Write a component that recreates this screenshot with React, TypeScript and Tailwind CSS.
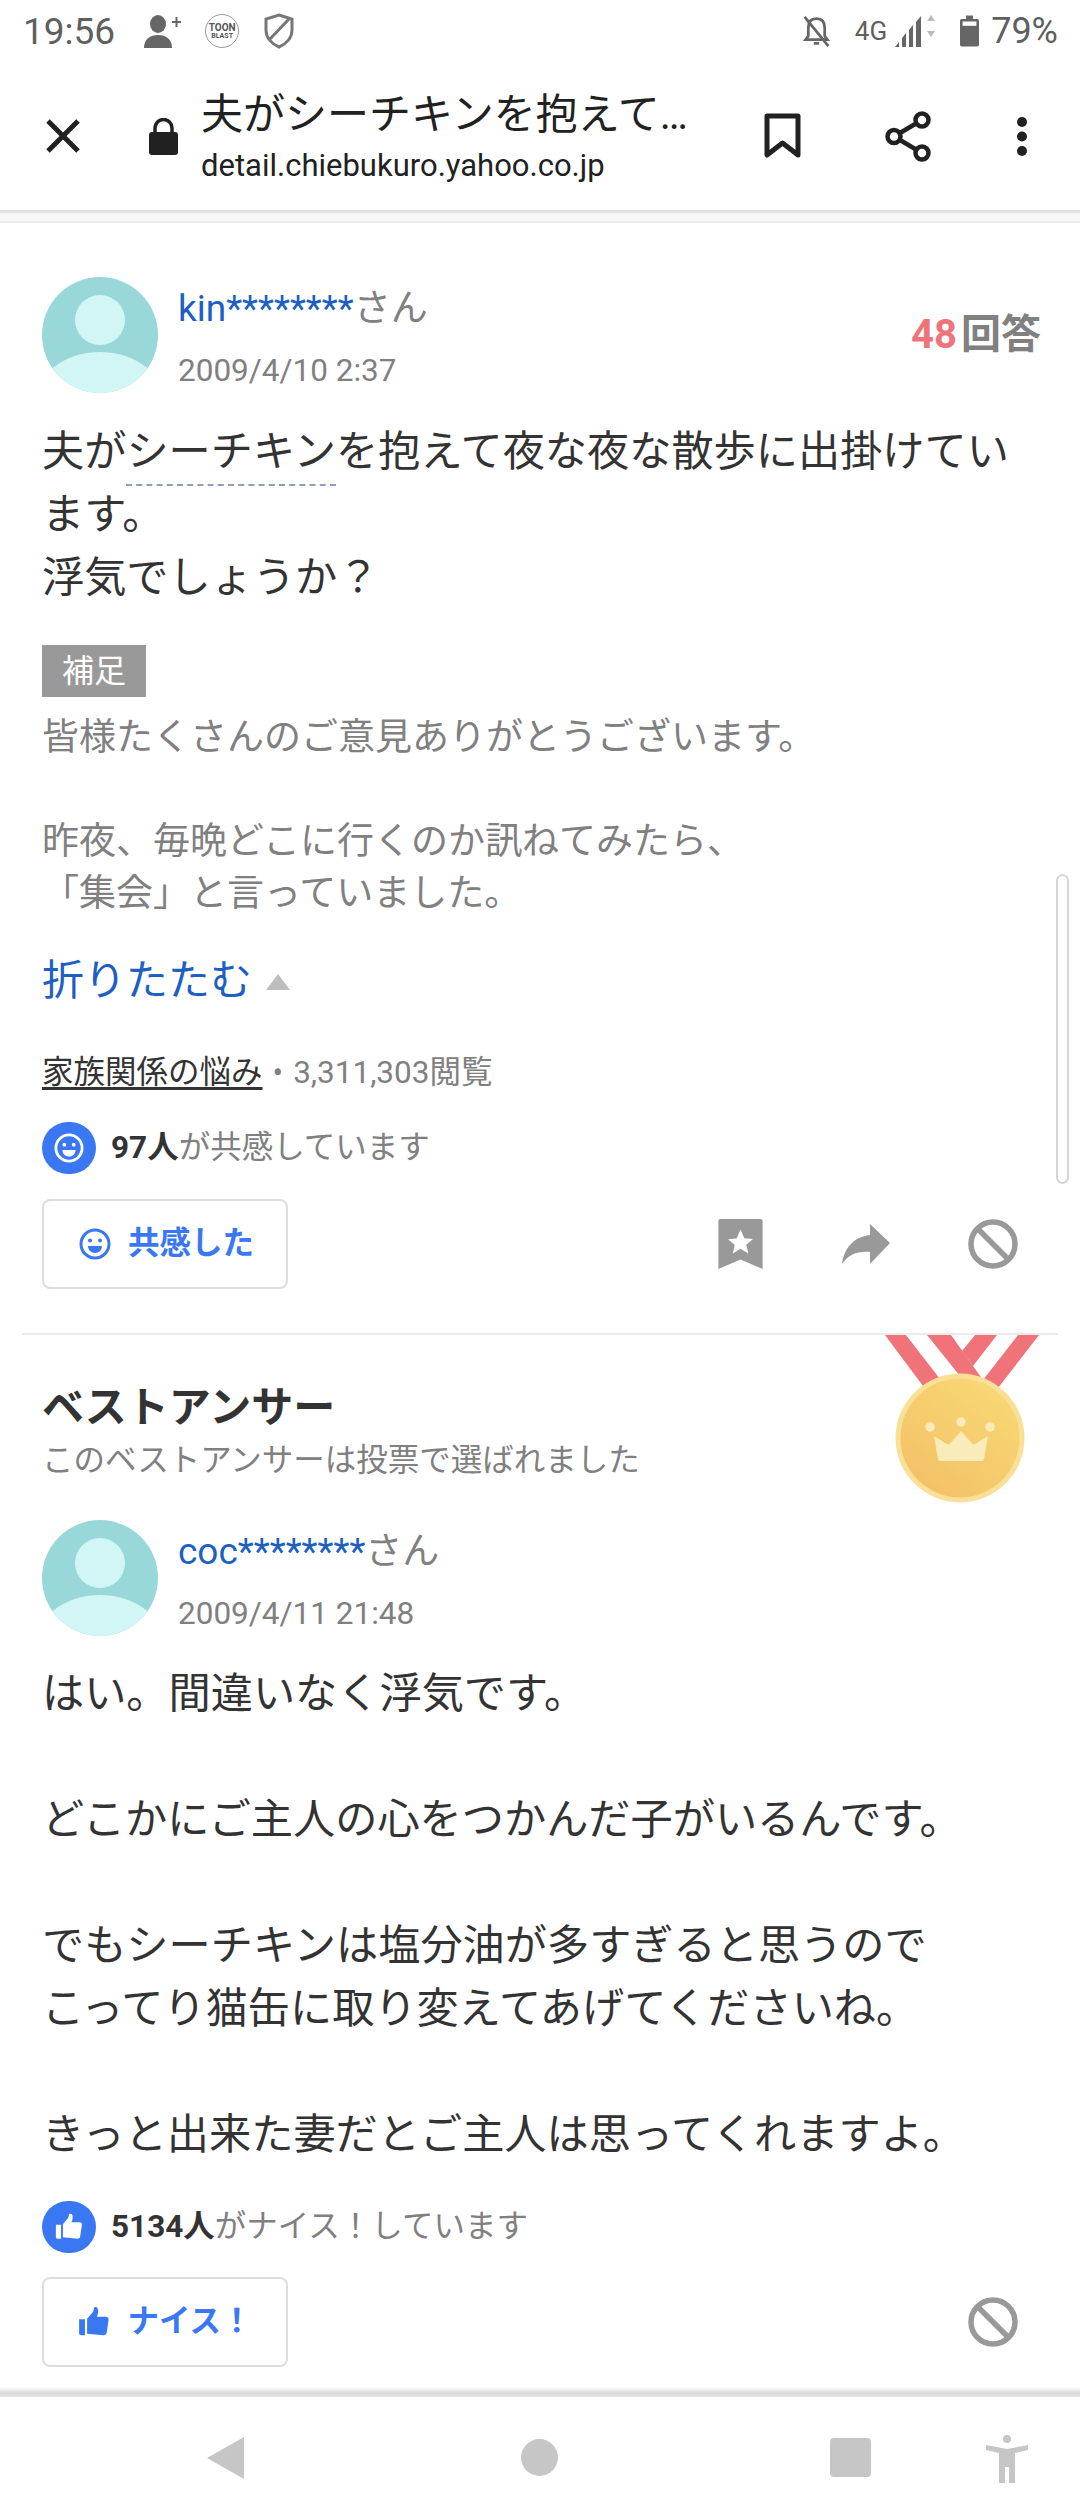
import React from "react";

const Avatar = () => (
  <svg viewBox="0 0 116 116" className="w-[116px] h-[116px] shrink-0">
    <defs>
      <clipPath id="avatarClip">
        <circle cx="58" cy="58" r="58" />
      </clipPath>
    </defs>
    <g clipPath="url(#avatarClip)">
      <rect width="116" height="116" fill="#99d8d8" />
      <ellipse cx="58" cy="43" rx="25" ry="25" fill="#d2f5f5" />
      <ellipse cx="58" cy="128" rx="66" ry="53" fill="#d2f5f5" />
    </g>
  </svg>
);

const Smile = ({ color, className }: { color: string; className: string }) => (
  <svg viewBox="0 0 32 32" className={className}>
    <circle cx="16" cy="16" r="14" fill="none" stroke={color} strokeWidth="3" />
    <circle cx="11" cy="12.5" r="2" fill={color} />
    <circle cx="21" cy="12.5" r="2" fill={color} />
    <path d="M9 18h14c0 4-3 7-7 7s-7-3-7-7z" fill={color} />
  </svg>
);

const Thumb = ({ color, className }: { color: string; className: string }) => (
  <svg viewBox="0 0 32 32" className={className}>
    <path d="M2 13.5h5.500v15H4a2 2 0 0 1-2-2z" fill={color} />
    <path d="M9.500 13l5.500-6.500c.6-.8.6-2 .8-3.200.2-1.500 2.200-2 3.200-.8 1.500 1.800 1.200 5.500-.3 8.500h8.300c2 0 3 1.300 2.700 3.200l-1.800 12c-.2 1.500-1.200 2.300-2.700 2.300L9.500 27z" fill={color} />
  </svg>
);

const Prohibit = () => (
  <svg viewBox="0 0 50 50" className="w-[50px] h-[50px] shrink-0">
    <circle cx="25" cy="25" r="22" fill="none" stroke="#999" strokeWidth="5.500" />
    <path d="M10 10l30 30" stroke="#999" strokeWidth="5.500" />
  </svg>
);

const Medal = () => (
  <svg viewBox="0 0 160 170" className="w-[160px] h-[170px]">
    <defs>
      <linearGradient id="medalFill" x1="0.8" y1="0.1" x2="0.2" y2="0.9">
        <stop offset="0" stopColor="#f8d774" />
        <stop offset="1" stopColor="#f3c268" />
      </linearGradient>
    </defs>
    <path d="M4 0h21l34 44-17 7z" fill="#f0737a" />
    <path d="M46 0h24l32 45-23-4z" fill="#f0737a" />
    <path d="M94 0h22L92 31 81 16z" fill="#f0737a" />
    <path d="M137 0h21l-41 53-15-8z" fill="#f0737a" />
    <circle cx="79" cy="103" r="64.500" fill="#fae097" />
    <circle cx="79" cy="103" r="59.500" fill="url(#medalFill)" />
    <circle cx="49" cy="92" r="4.700" fill="#faebbb" />
    <circle cx="80" cy="87" r="4.700" fill="#faebbb" />
    <circle cx="109" cy="92" r="4.700" fill="#faebbb" />
    <path d="M53 101l13 8c1 .7 2 .5 3-.5l11-12.500 11 12.500c1 1 2 1.200 3 .5l13-8-4 23c-.2 1.300-1 2-2 2H59c-1 0-1.800-.7-2-2z" fill="#faebbb" />
  </svg>
);

export default function App() {
  return (
    <div className="relative w-[1080px] h-[2520px] overflow-hidden bg-white flex flex-col font-['Roboto','Noto_Sans_CJK_JP',sans-serif]">
      {/* status bar */}
      <div className="h-[62px] flex items-center justify-between pl-[23px] pr-[22px] text-[#5f5f5f] shrink-0">
        <div className="flex items-center">
          <span className="text-[37px] leading-none">19:56</span>
          <svg viewBox="0 0 39 33" className="w-[39px] h-[33px] ml-[28px]">
            <ellipse cx="15" cy="9" rx="8" ry="9" fill="#666" />
            <path d="M1 33c0-9 6-13 14-13s14 4 14 13z" fill="#666" />
            <path d="M29 7h9M33.500 2v10" stroke="#666" strokeWidth="2" />
          </svg>
          <div className="w-[34px] h-[34px] ml-[23px] rounded-full border border-[#999] flex flex-col items-center justify-center font-bold text-[#555] leading-none">
            <span className="text-[10px]">TOON</span>
            <span className="text-[7px]">BLAST</span>
          </div>
          <svg viewBox="0 0 32 36" className="w-[32px] h-[36px] ml-[24px]">
            <path d="M16 2l13 4v11c0 8-6 14-13 17C9 31 3 25 3 17V6z" fill="none" stroke="#777" strokeWidth="3" />
            <path d="M7 26L26 6" stroke="#777" strokeWidth="3" />
          </svg>
        </div>
        <div className="flex items-center">
          <svg viewBox="0 0 34 36" className="w-[31px] h-[33px]">
            <path d="M17 4c-6 0-9 4-9 10v9l-3 4h24l-3-4v-9c0-6-3-10-9-10z" fill="none" stroke="#666" strokeWidth="3" />
            <path d="M14 31h6" stroke="#666" strokeWidth="3" />
            <path d="M4 2l26 32" stroke="#666" strokeWidth="3" />
          </svg>
          <span className="text-[26px] ml-[23px] leading-none">4G</span>
          <svg viewBox="0 0 45 36" className="w-[45px] h-[36px] ml-[7px]">
            <path d="M1 34l4-5v5zM8 34V25l4-5v14zM15 34V17l4-5v22zM22 34V9l5-6v31z" fill="#666" />
            <path d="M37 2l4 6h-8zM37 24l4-6h-8z" fill="#bbb" />
          </svg>
          <svg viewBox="0 0 22 36" className="w-[19px] h-[34px] ml-[21px]">
            <path d="M7 0h8v4h5a2 2 0 0 1 2 2v28a2 2 0 0 1-2 2H2a2 2 0 0 1-2-2V6a2 2 0 0 1 2-2h5z" fill="#666" />
            <rect x="3" y="7" width="16" height="5" fill="#fff" />
          </svg>
          <span className="text-[36px] ml-[12px] leading-none">79%</span>
        </div>
      </div>

      {/* toolbar */}
      <div className="h-[148px] flex items-center shrink-0 text-[#212121]">
        <svg viewBox="0 0 36 36" className="w-[36px] h-[36px] ml-[45px] shrink-0">
          <path d="M3 3l30 30M33 3L3 33" stroke="#212121" strokeWidth="5" />
        </svg>
        <svg viewBox="0 0 29 37" className="w-[29px] h-[37px] ml-[68px] shrink-0">
          <path d="M6 15v-5a8.500 8.500 0 0 1 17 0v5" fill="none" stroke="#212121" strokeWidth="3.500" />
          <rect x="0" y="14" width="29" height="23" rx="3" fill="#212121" />
        </svg>
        <div className="ml-[23px] w-[500px] shrink-0">
          <div className="text-[42px] leading-[58px]">夫がシーチキンを抱えて…</div>
          <div className="text-[31px] leading-[40px] mt-[2px]">detail.chiebukuro.yahoo.co.jp</div>
        </div>
        <svg viewBox="0 0 37 47" className="w-[37px] h-[47px] ml-[63px] shrink-0">
          <path d="M3 3h31v39L18.500 30 3 42z" fill="none" stroke="#212121" strokeWidth="5" strokeLinejoin="round" />
        </svg>
        <svg viewBox="0 0 46 51" className="w-[46px] h-[51px] ml-[84px] shrink-0">
          <circle cx="37" cy="9" r="6.500" fill="none" stroke="#212121" strokeWidth="4.500" />
          <circle cx="9" cy="25.500" r="6.500" fill="none" stroke="#212121" strokeWidth="4.500" />
          <circle cx="37" cy="42" r="6.500" fill="none" stroke="#212121" strokeWidth="4.500" />
          <path d="M15 22l16-9.500M15 29l16 9.500" stroke="#212121" strokeWidth="4.500" />
        </svg>
        <svg viewBox="0 0 12 41" className="w-[12px] h-[41px] ml-[85px] shrink-0">
          <circle cx="6" cy="6" r="5" fill="#212121" />
          <circle cx="6" cy="20.500" r="5" fill="#212121" />
          <circle cx="6" cy="35" r="5" fill="#212121" />
        </svg>
      </div>

      <div className="h-[3px] bg-[#e0e2e0] shrink-0" />
      <div className="h-[10px] bg-[#f7f7f7] border-b-2 border-[#ebebeb] shrink-0" />

      {/* question + answer */}
      <div className="flex-1 min-h-0 relative">
        <div className="px-[42px] pt-[54px]">
          <div className="flex items-center">
            <Avatar />
            <div className="ml-[20px] flex-1">
              <div className="text-[37px] leading-[48px] text-[#808080] mt-[6px]">
                <span className="text-[#1e5fc4]">kin********</span>さん
              </div>
              <div className="text-[31.5px] leading-[40px] text-[#808080] mt-[18px]">2009/4/10 2:37</div>
            </div>
            <div className="font-bold text-[40px] text-[#808080] mr-[-3px]">
              <span className="text-[#f0737a] mr-[4px]">48</span>回答
            </div>
          </div>

          <p className="mt-[27px] text-[42.2px] leading-[63px] text-[#333]">
            夫が<span className="border-b-2 border-dashed border-[#8aa0bd] pb-[8px]">シーチキン</span>を抱えて夜な夜な散歩に出掛けています。
            <br />
            浮気でしょうか？
          </p>

          <div className="mt-[36px] w-[104px] h-[52px] bg-[#999] text-white text-[32px] flex items-center justify-center">補足</div>
          <p className="mt-[15px] text-[37px] leading-[52px] text-[#808080]">
            皆様たくさんのご意見ありがとうございます。
            <br />
            <br />
            昨夜、毎晩どこに行くのか訊ねてみたら、
            <br />
            「集会」と言っていました。
          </p>

          <div className="mt-[31px] flex items-center">
            <span className="text-[42px] leading-[60px] text-[#1e5fc4]">折りたたむ</span>
            <span className="ml-[14px] mt-[2px] w-0 h-0 border-x-[12px] border-x-transparent border-b-[16px] border-b-[#bdbdbd]" />
          </div>

          <div className="mt-[40px] text-[31.5px] leading-[44px] text-[#808080]">
            <span className="text-[#333] underline underline-offset-4">家族関係の悩み</span>
            <span className="mx-[10px]">•</span>3,311,303閲覧
          </div>

          <div className="mt-[27px] flex items-center">
            <div className="w-[54px] h-[52px] rounded-full bg-[#3a77f2] flex items-center justify-center">
              <Smile color="#fff" className="w-[30px] h-[30px]" />
            </div>
            <div className="ml-[15px] text-[31.5px] text-[#808080]">
              <span className="font-bold text-[#333]">97人</span>が共感しています
            </div>
          </div>

          <div className="mt-[25px] flex items-center">
            <div className="w-[246px] h-[90px] pl-[3px] border-2 border-[#dedede] rounded-[8px] flex items-center justify-center text-[#3a77f2] font-bold text-[31.5px] shrink-0">
              <Smile color="#3a77f2" className="w-[32px] h-[32px] mr-[17px]" />
              共感した
            </div>
            <svg viewBox="0 0 46 52" className="w-[45px] h-[50px] ml-[430px] shrink-0">
              <path d="M2 0h42a2 2 0 0 1 2 2v50L23 42 0 52V2a2 2 0 0 1 2-2z" fill="#999" />
              <path d="M23 11l4 9 9 .8-7 6 2.200 9L23 31l-8 4.800L17 27l-7-6 9-.8z" fill="#fff" />
            </svg>
            <svg viewBox="0 0 48 40" className="w-[48px] h-[40px] ml-[79px] shrink-0">
              <path d="M28 0l20 19-20 21V28C16 27 7 30 0 40 2 25 11 13 28 11z" fill="#999" />
            </svg>
            <div className="ml-[78px]"><Prohibit /></div>
          </div>
        </div>

        <div className="relative mx-[22px] mt-[44px] h-[2px] bg-[#ebebeb]">
          <div className="absolute left-[859px] top-[2px]"><Medal /></div>
        </div>

        <div className="px-[42px] pt-[48px]">
          <div className="text-[42px] leading-[50px] font-bold text-[#333]">ベストアンサー</div>
          <div className="text-[31.5px] leading-[44px] text-[#808080] mt-[6px]">このベストアンサーは投票で選ばれました</div>

          <div className="flex items-center mt-[37px]">
            <Avatar />
            <div className="ml-[20px] flex-1">
              <div className="text-[37px] leading-[48px] text-[#808080] mt-[6px]">
                <span className="text-[#1e5fc4]">coc********</span>さん
              </div>
              <div className="text-[31.5px] leading-[40px] text-[#808080] mt-[18px]">2009/4/11 21:48</div>
            </div>
          </div>

          <p className="mt-[26px] text-[42.2px] leading-[63px] text-[#333]">
            はい。間違いなく浮気です。
            <br />
            <br />
            どこかにご主人の心をつかんだ子がいるんです。
            <br />
            <br />
            でもシーチキンは塩分油が多すぎると思うので
            <br />
            こってり猫缶に取り変えてあげてくださいね。
            <br />
            <br />
            きっと出来た妻だとご主人は思ってくれますよ。
          </p>

          <div className="mt-[35px] flex items-center">
            <div className="w-[54px] h-[52px] rounded-full bg-[#3a77f2] flex items-center justify-center">
              <Thumb color="#fff" className="w-[30px] h-[30px]" />
            </div>
            <div className="ml-[15px] text-[31.5px] text-[#808080]">
              <span className="font-bold text-[#333]">5134人</span>がナイス！しています
            </div>
          </div>

          <div className="mt-[24px] flex items-center justify-between pr-[20px]">
            <div className="w-[246px] h-[90px] border-2 border-[#dedede] rounded-[8px] flex items-center justify-center text-[#3a77f2] font-bold text-[31.5px]">
              <Thumb color="#3a77f2" className="w-[34px] h-[34px] mr-[16px]" />
              ナイス！
            </div>
            <Prohibit />
          </div>
        </div>

        {/* scroll indicator */}
        <div className="absolute right-[11px] top-[651px] w-[13px] h-[310px] rounded-full border-2 border-[#d5d5d5] bg-white" />
      </div>

      {/* nav bar */}
      <div className="h-[133px] shrink-0 bg-white">
        <div className="h-[7px] bg-gradient-to-b from-white to-[#d4d4d4]" />
        <div className="h-[3px] bg-[#e0e2e0]" />
        <div className="h-[123px] flex items-start">
          <svg viewBox="0 0 37 42" className="w-[37px] h-[42px] ml-[207px] mt-[40px] shrink-0">
            <path d="M37 0v42L0 21z" fill="#c6c6c6" />
          </svg>
          <div className="w-[37px] h-[37px] ml-[277px] mt-[42px] rounded-full bg-[#c6c6c6] shrink-0" />
          <div className="w-[41px] h-[39px] ml-[272px] mt-[41px] rounded-[4px] bg-[#c6c6c6] shrink-0" />
          <svg viewBox="0 0 42 48" className="w-[42px] h-[48px] ml-[115px] mt-[38px] shrink-0">
            <circle cx="21" cy="4" r="4" fill="#c6c6c6" />
            <path d="M0 10l21 4 21-4v5l-13 3v30h-6V32h-4v16h-6V18L0 15z" fill="#c6c6c6" />
          </svg>
        </div>
      </div>
    </div>
  );
}
